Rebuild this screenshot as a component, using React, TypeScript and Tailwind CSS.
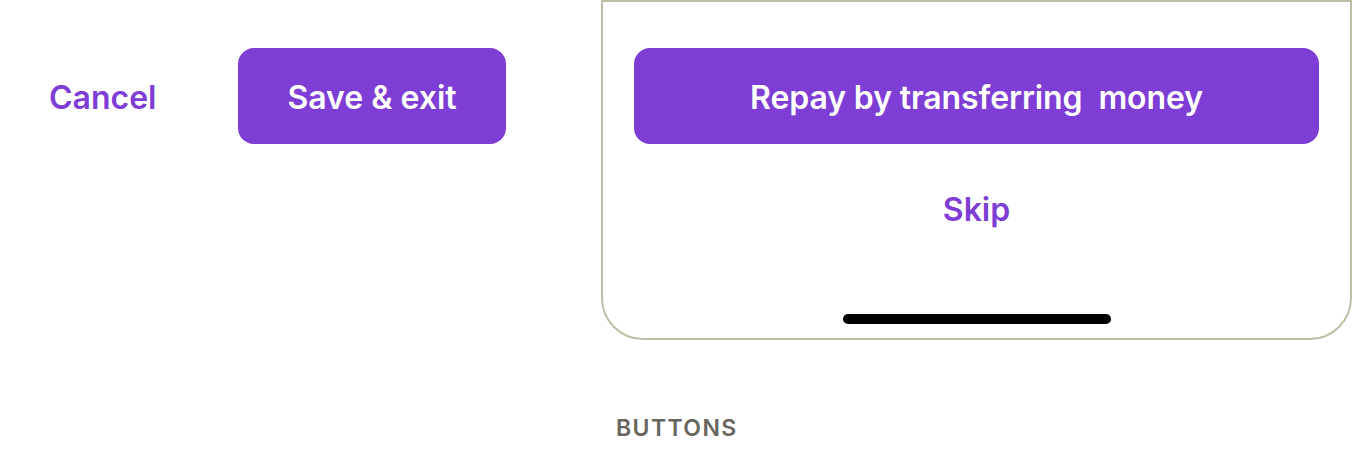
export default function App() {
  return (
    <div
      className="w-[1352px] h-[464px] bg-white overflow-hidden flex flex-col"
      style={{ fontFamily: "Inter, 'Noto Sans', sans-serif" }}
    >
      <div className="flex">
        {/* Left: cancel + save */}
        <div className="w-[601px] shrink-0 pt-[48px] pl-[49px] flex items-start">
          <div className="w-[189px] h-[96px] pt-[3px] flex items-center">
            <span className="text-[32px] font-semibold text-[#7e3dd4]">Cancel</span>
          </div>
          <button className="w-[268px] h-[96px] pt-[3px] rounded-[16px] bg-[#7e3dd4] text-white text-[32px] font-semibold">
            Save &amp; exit
          </button>
        </div>

        {/* Right: phone bottom sheet */}
        <div className="w-[751px] h-[340px] shrink-0 border-2 border-[#bfbda5] rounded-b-[42px] flex flex-col items-center px-[31px] pt-[46px]">
          <button className="w-full h-[96px] pt-[3px] rounded-[16px] bg-[#7e3dd4] text-white text-[32px] font-semibold tracking-[-0.1px]">
            Repay by transferring&nbsp; money
          </button>
          <span className="mt-[48px] leading-[36px] text-[32px] font-semibold text-[#7e3dd4]">Skip</span>
          <div className="mt-[86px] w-[268px] h-[10px] rounded-full bg-black" />
        </div>
      </div>

      <div className="pl-[616px] mt-[75px] text-[23px] font-semibold tracking-[1.4px] text-[#66665e] leading-[26px]">
        BUTTONS
      </div>
    </div>
  );
}
